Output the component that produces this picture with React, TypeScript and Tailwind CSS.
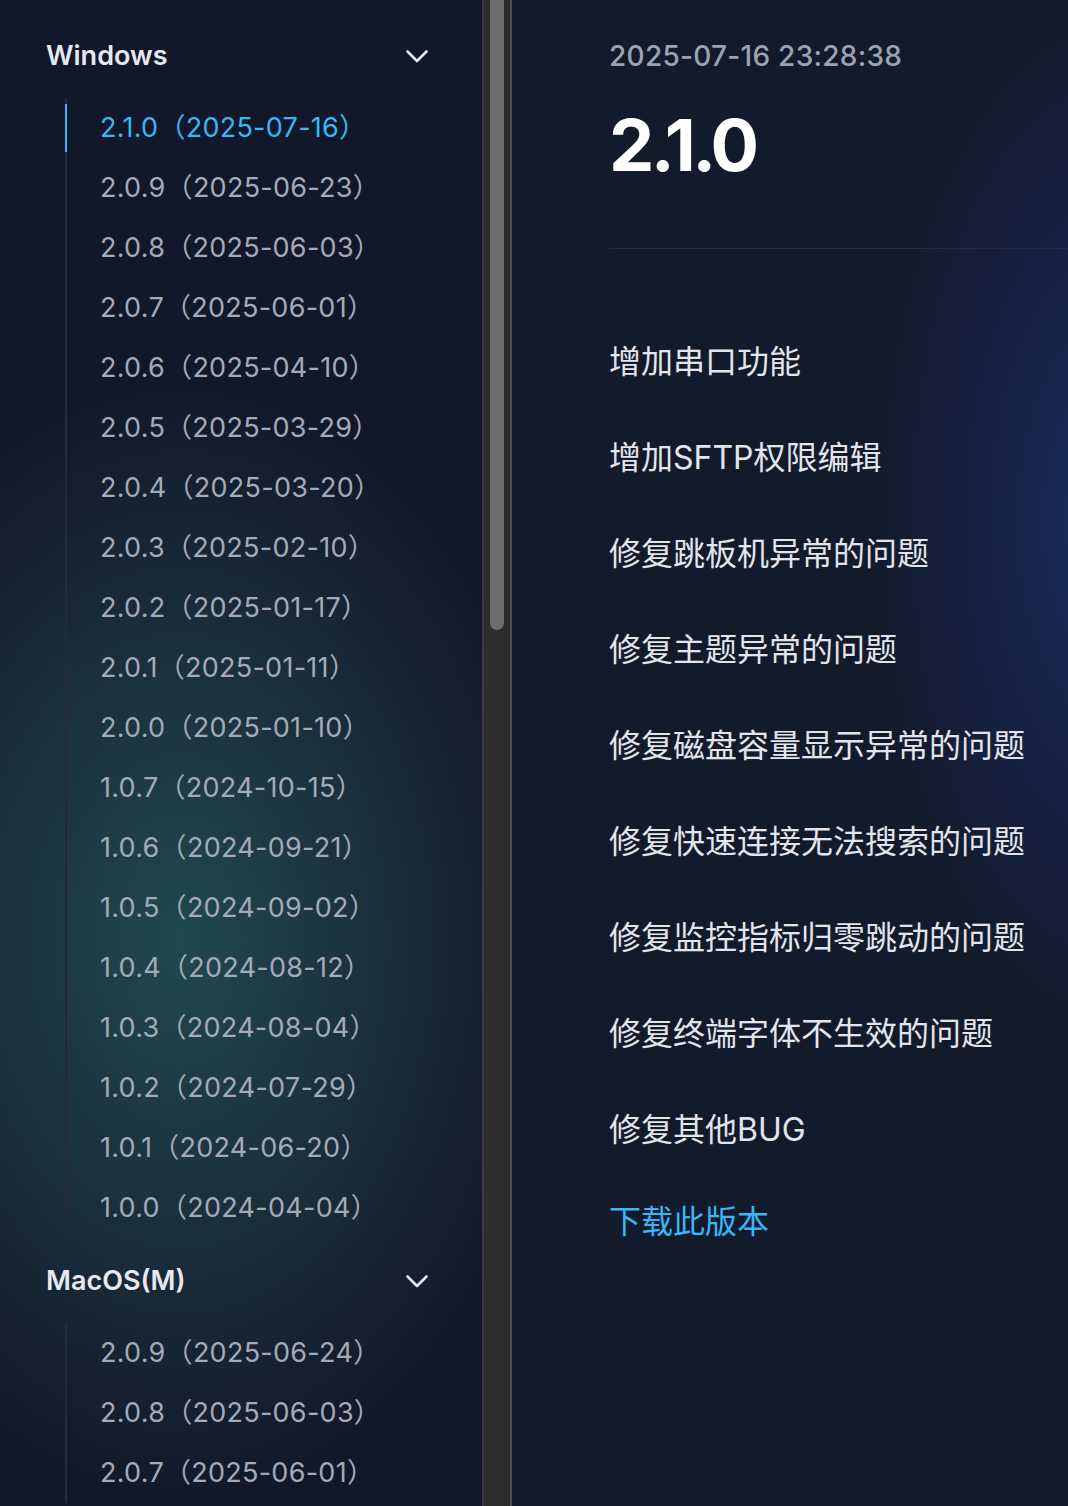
import React from "react";

type Release = { version: string; date: string };

const windows: Release[] = [
  { version: "2.1.0", date: "2025-07-16" },
  { version: "2.0.9", date: "2025-06-23" },
  { version: "2.0.8", date: "2025-06-03" },
  { version: "2.0.7", date: "2025-06-01" },
  { version: "2.0.6", date: "2025-04-10" },
  { version: "2.0.5", date: "2025-03-29" },
  { version: "2.0.4", date: "2025-03-20" },
  { version: "2.0.3", date: "2025-02-10" },
  { version: "2.0.2", date: "2025-01-17" },
  { version: "2.0.1", date: "2025-01-11" },
  { version: "2.0.0", date: "2025-01-10" },
  { version: "1.0.7", date: "2024-10-15" },
  { version: "1.0.6", date: "2024-09-21" },
  { version: "1.0.5", date: "2024-09-02" },
  { version: "1.0.4", date: "2024-08-12" },
  { version: "1.0.3", date: "2024-08-04" },
  { version: "1.0.2", date: "2024-07-29" },
  { version: "1.0.1", date: "2024-06-20" },
  { version: "1.0.0", date: "2024-04-04" },
];

const macos: Release[] = [
  { version: "2.0.9", date: "2025-06-24" },
  { version: "2.0.8", date: "2025-06-03" },
  { version: "2.0.7", date: "2025-06-01" },
];

const notes = [
  "增加串口功能",
  "增加SFTP权限编辑",
  "修复跳板机异常的问题",
  "修复主题异常的问题",
  "修复磁盘容量显示异常的问题",
  "修复快速连接无法搜索的问题",
  "修复监控指标归零跳动的问题",
  "修复终端字体不生效的问题",
  "修复其他BUG",
];

const Chevron = () => (
  <svg width="22" height="13" viewBox="0 0 22 13" fill="none">
    <polyline
      points="1.5,1.5 11,11 20.5,1.5"
      stroke="#e6e9f2"
      strokeWidth="2.6"
      strokeLinecap="round"
      strokeLinejoin="round"
    />
  </svg>
);

const Section = ({
  title,
  items,
  active,
}: {
  title: string;
  items: Release[];
  active?: string;
}) => (
  <div>
    <div className="h-[60px] flex items-center justify-between">
      <span className="text-[27px] font-semibold text-[#e6e9f2]">{title}</span>
      <Chevron />
    </div>
    <ul className="mt-[12px] ml-[19px] border-l-2 border-[#232a3b]">
      {items.map((r) => {
        const isActive = r.version === active;
        return (
          <li key={r.version + r.date} className="relative h-[60px] flex items-center pl-[33px]">
            {isActive && (
              <span className="absolute -left-[2px] top-[6px] h-[48px] w-[2px] bg-[#38b6f5]" />
            )}
            <span
              className={
                isActive
                  ? "text-[27px] tracking-[0.01em] text-[#38b6f5] whitespace-nowrap"
                  : "text-[27px] tracking-[0.01em] text-[#a3aaba] whitespace-nowrap"
              }
            >
              {r.version}（{r.date}）
            </span>
          </li>
        );
      })}
    </ul>
  </div>
);

export default function App() {
  return (
    <div className="w-[1068px] h-[1506px] overflow-hidden flex bg-[#121829] font-['Inter','Noto_Sans_CJK_SC',sans-serif]">
      {/* Sidebar */}
      <aside className="w-[482px] shrink-0 pl-[46px] pr-[54px] pt-[26px] bg-[radial-gradient(ellipse_380px_560px_at_180px_940px,rgba(44,104,108,0.6),rgba(18,24,41,0))]">
        <Section title="Windows" items={windows} active="2.1.0" />
        <div className="mt-[13px]">
          <Section title="MacOS(M)" items={macos} />
        </div>
      </aside>

      {/* Scrollbar gutter */}
      <div className="w-[30px] shrink-0 bg-[#2c2c2c] border-l-2 border-[#3a3a3a] border-r-2 border-r-[#4f4f4f]">
        <div className="ml-[6px] w-[14px] h-[630px] rounded-b-full bg-[#6c6c6c]" />
      </div>

      {/* Release detail */}
      <main className="flex-1 pl-[97px] pt-[36px] bg-[radial-gradient(ellipse_240px_520px_at_600px_520px,rgba(32,62,150,0.5),rgba(18,24,41,0))] bg-[#131a2c]">
        <div className="h-[40px] flex items-center text-[28px] font-medium tracking-[0.01em] text-[#9ca3b4]">
          2025-07-16 23:28:38
        </div>
        <h1 className="mt-[33px] h-[72px] flex items-center text-[72px] font-bold tracking-[-0.05em] text-white leading-none">
          2.1.0
        </h1>
        <div className="mt-[67px] border-t border-[#242b3c]" />
        <ul className="mt-[65px]">
          {notes.map((n) => (
            <li key={n} className="h-[96px] flex items-center text-[32px] text-[#e2e5ec] whitespace-nowrap">
              {n}
            </li>
          ))}
        </ul>
        <a className="mt-[20px] h-[48px] flex items-center text-[32px] text-[#38b6f5]">下载此版本</a>
      </main>
    </div>
  );
}
